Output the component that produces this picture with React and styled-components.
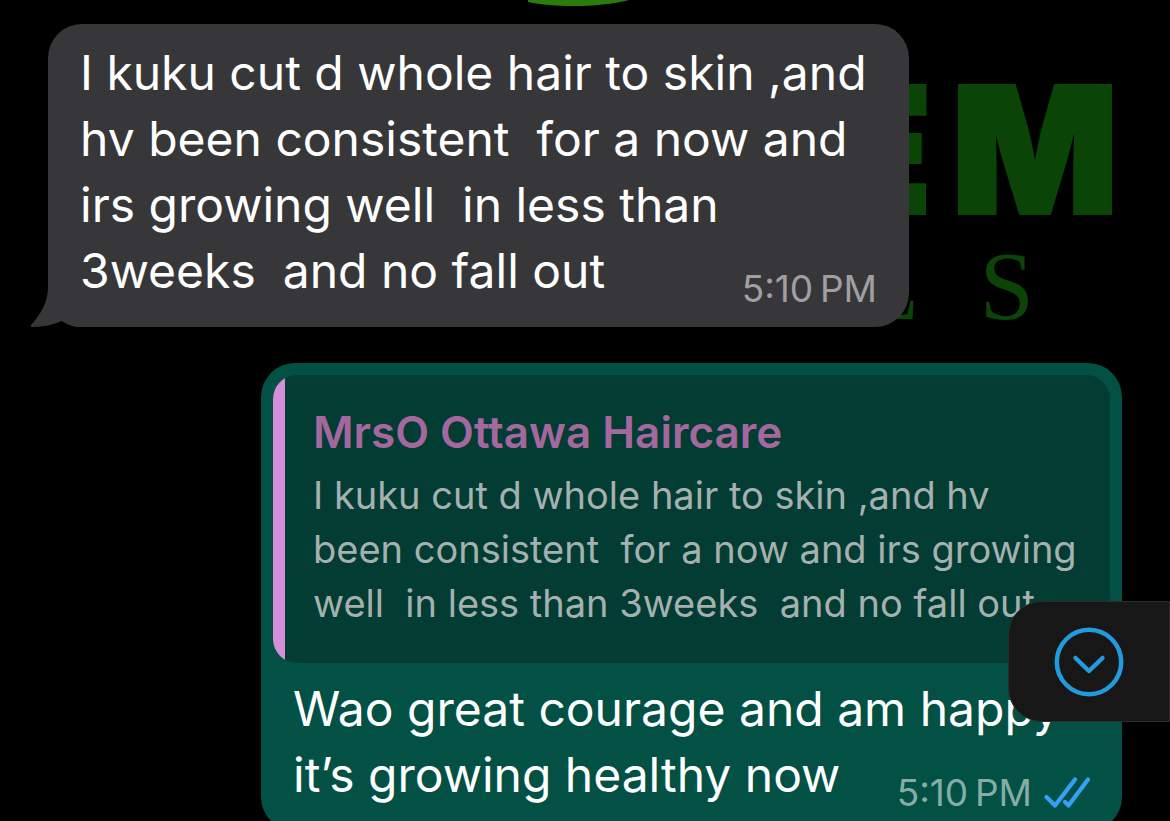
import React from "react";
import styled, { createGlobalStyle } from "styled-components";

const Colors = {
  page: "#000000",
  incoming: "#373739",
  outgoing: "#025144",
  quote: "#023c33",
  quoteBar: "#d48fdb",
  quoteName: "#a4689f",
  quoteText: "#a5b1af",
  logo: "#0a4406",
  leaf: "#2b7d0b",
  link: "#229ade",
  tick: "#35a0f8",
};

const GlobalStyle = createGlobalStyle`
  * {
    box-sizing: border-box;
  }

  body {
    margin: 0;
    background-color: ${Colors.page};
    font-family: Inter, "Liberation Sans", sans-serif;
  }
`;

const Chat = styled.main`
  position: relative;
  display: flex;
  flex-direction: column;
  gap: 36px;
  height: 100vh;
  padding: 24px 48px 0;
  overflow: hidden;
`;

const Wallpaper = styled.div`
  position: absolute;
  top: 0;
  right: 52px;
  color: ${Colors.logo};
`;

const Leaf = styled.svg`
  position: absolute;
  top: 0;
  right: 524px;
`;

const Brand = styled.div`
  display: flex;
  justify-content: flex-end;
  gap: 20px;
  margin-top: 60px;
  font-size: 174px;
  line-height: 180px;
  font-weight: 900;
  -webkit-text-stroke: 4px ${Colors.logo};
`;

const Tagline = styled.div`
  display: flex;
  justify-content: flex-end;
  gap: 60px;
  padding-right: 84px;
  font-family: "Liberation Serif", serif;
  font-size: 98px;
  line-height: 92px;
`;

const Bubble = styled.article`
  position: relative;
  flex-shrink: 0;
  border-radius: 34px;
  color: #ffffff;
  background-color: ${(props) =>
    props.$own ? Colors.outgoing : Colors.incoming};
  margin-left: ${(props) => (props.$own ? "213px" : "0")};
  margin-right: ${(props) => (props.$own ? "0" : "213px")};
  padding: ${(props) => (props.$own ? "12px" : "16px")} 12px 17px;
`;

const Tail = styled.svg`
  position: absolute;
  left: -18px;
  bottom: 0;
`;

const Body = styled.div`
  display: grid;
  padding: 0 20px;

  > * {
    grid-area: 1 / 1;
  }
`;

const Text = styled.p`
  margin: 0 0 6px;
  font-size: 48px;
  line-height: 66px;
  white-space: pre;
`;

const Meta = styled.div`
  display: flex;
  align-items: center;
  gap: 12px;
  align-self: end;
  justify-self: end;
  color: ${(props) => (props.$own ? "#85ada5" : "#a09fa5")};
  font-size: 37px;
  line-height: 42px;
`;

const Quote = styled.blockquote`
  display: flex;
  margin: 0 0 13px;
  border-radius: 24px;
  background-color: ${Colors.quote};
  overflow: hidden;

  &::before {
    content: "";
    flex: 0 0 12px;
    background-color: ${Colors.quoteBar};
  }
`;

const QuoteContent = styled.div`
  padding: 28px 24px 33px 28px;
`;

const QuoteName = styled.h2`
  margin: 0 0 7px;
  color: ${Colors.quoteName};
  font-size: 44px;
  line-height: 58px;
  font-weight: 600;
`;

const QuoteText = styled.p`
  margin: 0;
  color: ${Colors.quoteText};
  font-size: 38px;
  line-height: 54px;
  white-space: pre;
`;

const ScrollButton = styled.button`
  position: absolute;
  right: 0;
  bottom: 99px;
  display: flex;
  align-items: center;
  width: 162px;
  height: 121px;
  padding: 0 0 0 45px;
  border: 1px solid #2c2c2c;
  border-radius: 34px 0 0 34px;
  background-color: #171717;
  cursor: pointer;
`;

function Logo() {
  return (
    <Wallpaper aria-hidden="true">
      <Brand>
        <span>E</span>
        <span>M</span>
      </Brand>
      <Tagline>
        <span>L</span>
        <span>S</span>
      </Tagline>
    </Wallpaper>
  );
}

function Ticks() {
  return (
    <svg
      width="46"
      height="32"
      viewBox="0 0 46 32"
      fill="none"
      stroke={Colors.tick}
      strokeWidth="4.2"
      strokeLinecap="round"
      strokeLinejoin="round"
      role="img"
      aria-label="Read"
    >
      <path d="M2.500 20L11 28.500L31 2.500" />
      <path d="M21 25L24.500 28.500L44 2.500" />
    </svg>
  );
}

function App() {
  return (
    <>
      <GlobalStyle />
      <Chat>
        <Leaf width="160" height="7" viewBox="0 0 160 7" aria-hidden="true">
          <path d="M42 0V2C68 7.500 112 8 143 0Z" fill={Colors.leaf} />
        </Leaf>
        <Logo />

        <Bubble>
          <Tail width="60" height="40" viewBox="0 0 60 40" aria-hidden="true">
            <path
              d="M18 0C18 16 10 28 1 38Q0 40 3 40C14 40 25 37 32 34C38 38 44 40 52 40V0Z"
              fill={Colors.incoming}
            />
          </Tail>
          <Body>
            <Text>
              {"I kuku cut d whole hair to skin ,and\n"}
              {"hv been consistent  for a now and\n"}
              {"irs growing well  in less than\n"}
              {"3weeks  and no fall out"}
            </Text>
            <Meta>
              <time>5:10&#8239;PM</time>
            </Meta>
          </Body>
        </Bubble>

        <Bubble $own>
          <Quote>
            <QuoteContent>
              <QuoteName>MrsO Ottawa Haircare</QuoteName>
              <QuoteText>
                {"I kuku cut d whole hair to skin ,and hv\n"}
                {"been consistent  for a now and irs growing\n"}
                {"well  in less than 3weeks  and no fall out"}
              </QuoteText>
            </QuoteContent>
          </Quote>
          <Body>
            <Text>
              {"Wao great courage and am happy\n"}
              {"it’s growing healthy now"}
            </Text>
            <Meta $own>
              <time>5:10&#8239;PM</time>
              <Ticks />
            </Meta>
          </Body>
        </Bubble>

        <ScrollButton type="button" aria-label="Scroll to latest message">
          <svg
            width="70"
            height="70"
            viewBox="0 0 70 70"
            fill="none"
            stroke={Colors.link}
            strokeWidth="4.500"
            strokeLinecap="round"
            strokeLinejoin="round"
          >
            <circle cx="35" cy="35" r="32.200" />
            <path d="M21.500 31L35 44L48.500 31" />
          </svg>
        </ScrollButton>
      </Chat>
    </>
  );
}

export default App;
